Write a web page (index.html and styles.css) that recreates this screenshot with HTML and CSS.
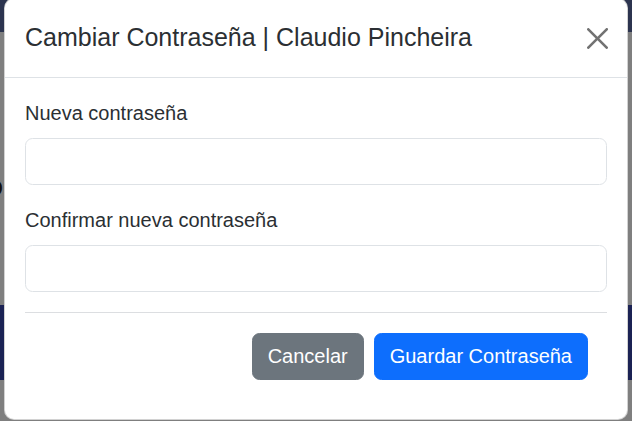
FILE: index.html
```html
<!DOCTYPE html>
<html lang="es">
<head>
<meta charset="utf-8">
<title>Cambiar Contraseña</title>
<link rel="stylesheet" href="styles.css">
</head>
<body>
<div class="page">
  <header class="page-nav"></header>
  <section class="page-main">
    <div class="page-title-wrap"><h2 class="page-title">Usuario</h2></div>
  </section>
  <section class="page-band"></section>
</div>
<div class="backdrop"></div>
<div class="modal" role="dialog" aria-modal="true">
  <div class="modal-content">
    <div class="modal-header">
      <h5 class="modal-title">Cambiar Contraseña | Claudio Pincheira</h5>
      <button class="btn-close" type="button" aria-label="Cerrar">
        <svg class="btn-close-icon" viewBox="0 0 16 16" width="21" height="21" aria-hidden="true"><path d="M.293.293a1 1 0 0 1 1.414 0L8 6.586 14.293.293a1 1 0 1 1 1.414 1.414L9.414 8l6.293 6.293a1 1 0 0 1-1.414 1.414L8 9.414l-6.293 6.293a1 1 0 0 1-1.414-1.414L6.586 8 .293 1.707a1 1 0 0 1 0-1.414z"/></svg>
      </button>
    </div>
    <div class="modal-body">
      <form class="pw-form">
        <div class="field">
          <label class="form-label" for="pw1">Nueva contraseña</label>
          <input class="form-control" type="password" id="pw1">
        </div>
        <div class="field">
          <label class="form-label" for="pw2">Confirmar nueva contraseña</label>
          <input class="form-control" type="password" id="pw2">
        </div>
        <hr class="divider">
        <div class="actions">
          <button class="btn btn-secondary" type="button">Cancelar</button>
          <button class="btn btn-primary" type="submit">Guardar Contraseña</button>
        </div>
      </form>
    </div>
  </div>
</div>
</body>
</html>
```
FILE: styles.css
```css
* { box-sizing: border-box; }

html, body {
  margin: 0;
  padding: 0;
  width: 632px;
  height: 421px;
  overflow: hidden;
}

body {
  font-family: "Liberation Sans", Arial, sans-serif;
  color: #212529;
  background: #ffffff;
  position: relative;
}

.page {
  display: flex;
  flex-direction: column;
  width: 632px;
  height: 421px;
}

.page-nav {
  height: 32px;
  background: #58689f;
  flex: none;
}

.page-main {
  height: 273px;
  flex: none;
  padding-top: 136px;
}

.page-title-wrap {
  width: 3px;
  display: flex;
  justify-content: flex-end;
}

.page-title {
  margin: 0;
  white-space: nowrap;
  font-size: 30px;
  line-height: 36px;
  font-weight: 700;
  color: #2a2016;
}

.page-band {
  height: 75px;
  flex: none;
  background: #3644a8;
}

.backdrop {
  position: absolute;
  inset: 0;
  background: rgba(0, 0, 0, 0.5);
}

.modal {
  position: absolute;
  left: 4px;
  top: -2px;
  width: 624px;
}

.modal-content {
  background: #ffffff;
  border: 1px solid rgba(0, 0, 0, 0.175);
  border-radius: 10px;
  overflow: hidden;
}

.modal-header {
  display: flex;
  align-items: center;
  justify-content: space-between;
  padding: 20px;
  border-bottom: 1px solid #dee2e6;
}

.modal-title {
  margin: 0;
  font-size: 25px;
  line-height: 37.5px;
  font-weight: 400;
  color: #2b2f33;
}

.btn-close {
  border: 0;
  background: transparent;
  padding: 0;
  margin: 1px -1px 0 auto;
  width: 21px;
  height: 21px;
  display: flex;
  cursor: pointer;
}

.btn-close-icon {
  display: block;
  fill: #000000;
  opacity: 0.55;
}

.modal-body {
  padding: 20px;
}

.pw-form {
  margin: 0;
}

.field {
  margin-bottom: 20px;
}

.form-label {
  display: block;
  font-size: 20px;
  line-height: 30px;
  margin-bottom: 10px;
  color: #2b2f33;
}

.form-control {
  display: block;
  width: 100%;
  height: 47px;
  padding: 7.5px 15px;
  font-family: inherit;
  font-size: 20px;
  border: 1px solid #dee2e6;
  border-radius: 7.5px;
  background: #ffffff;
  outline: none;
}

.divider {
  margin: 0 0 20px;
  border: 0;
  border-top: 1px solid #dcdee1;
  height: 0;
}

.actions {
  display: flex;
  justify-content: flex-end;
  gap: 10px;
  padding-right: 19px;
  margin-bottom: 19px;
}

.btn {
  font-family: inherit;
  font-size: 20px;
  line-height: 30px;
  padding: 7.5px 15px;
  border: 1px solid transparent;
  border-radius: 7.5px;
  color: #ffffff;
  cursor: pointer;
}

.btn-secondary {
  background: #6c757d;
  border-color: #6c757d;
}

.btn-primary {
  background: #0d6efd;
  border-color: #0d6efd;
}
```
